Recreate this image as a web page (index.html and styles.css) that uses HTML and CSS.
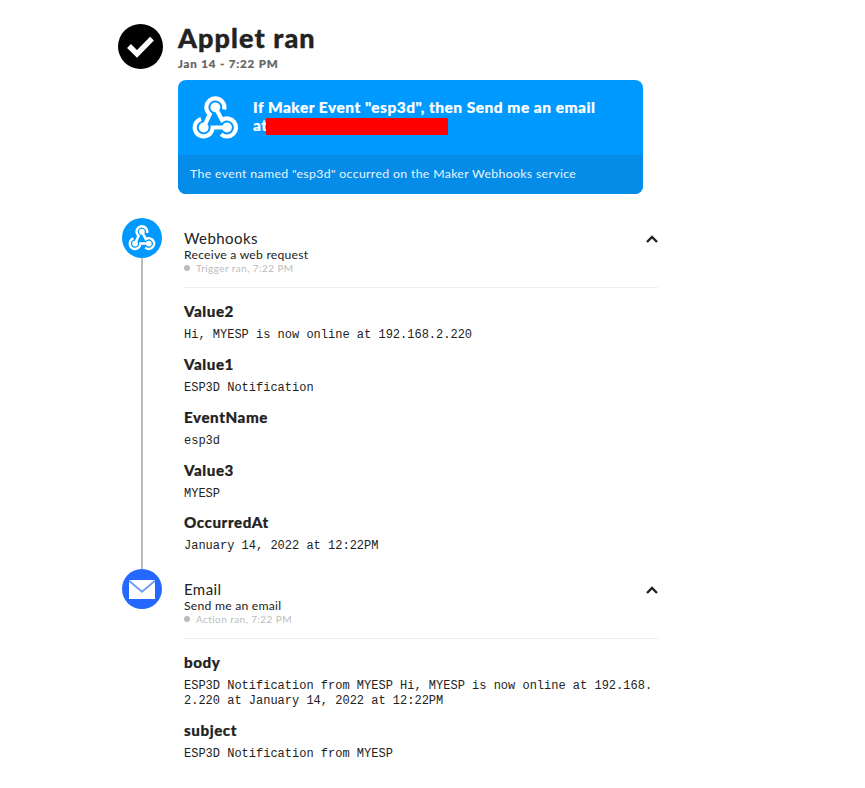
FILE: index.html
```html
<!DOCTYPE html>
<html lang="en">
<head>
<meta charset="utf-8">
<title>Applet ran</title>
<link rel="stylesheet" href="styles.css">
</head>
<body>
<svg class="defs" width="0" height="0" aria-hidden="true">
  <symbol id="webhook" viewBox="0 0 47 44">
    <g fill="none" stroke="currentColor" stroke-width="4.2">
      <path d="M32.1 13.4A9 9 0 1 0 17.7 18.3L11.7 31.5"/>
      <path d="M23.3 11.3L30 24A9 9 0 1 1 29 38.2"/>
      <path d="M35 31.5H20.7A9 9 0 1 1 9 22.9"/>
    </g>
    <g fill="currentColor"><circle cx="23.3" cy="11.3" r="4.9"/><circle cx="11.7" cy="31.5" r="4.9"/><circle cx="35" cy="31.5" r="4.9"/></g>
  </symbol>
</svg>
<main class="activity">
  <header class="summary">
    <svg class="status" viewBox="0 0 45 45"><circle cx="22.5" cy="22.5" r="22.5"/><path d="M11 22L19 30L34 14.7" fill="none" stroke="#fff" stroke-width="5.4"/></svg>
    <div class="summary-body">
      <h1>Applet ran</h1>
      <p class="date">Jan 14 - 7:22 PM</p>
      <section class="card">
        <div class="card-main">
          <svg class="card-icon"><use href="#webhook"/></svg>
          <p class="card-title">If Maker Event "esp3d", then Send me an email<br>at<span class="redacted"></span></p>
        </div>
        <p class="card-note">The event named "esp3d" occurred on the Maker Webhooks service</p>
      </section>
    </div>
  </header>

  <section class="step">
    <div class="rail">
      <div class="badge webhooks"><svg class="badge-hook"><use href="#webhook"/></svg></div>
      <div class="connector"></div>
    </div>
    <div class="content content-first">
      <div class="step-head">
        <div>
          <h2>Webhooks</h2>
          <p class="desc">Receive a web request</p>
          <p class="ran"><i class="dot"></i>Trigger ran, 7:22 PM</p>
        </div>
        <svg class="chevron" viewBox="0 0 12 8"><path d="M1 7L6 2L11 7"/></svg>
      </div>
      <dl>
        <dt>Value2</dt><dd>Hi, MYESP is now online at 192.168.2.220</dd>
        <dt>Value1</dt><dd>ESP3D Notification</dd>
        <dt>EventName</dt><dd>esp3d</dd>
        <dt>Value3</dt><dd>MYESP</dd>
        <dt>OccurredAt</dt><dd>January 14, 2022 at 12:22PM</dd>
      </dl>
    </div>
  </section>

  <section class="step">
    <div class="rail">
      <div class="badge email"><svg class="envelope" viewBox="0 0 26 19"><path d="M0 0H26V19H0Z" fill="#fff"/><path d="M0 .8L13 11.8L26 .8" fill="none" stroke="#6d9bff" stroke-width="1.8"/></svg></div>
    </div>
    <div class="content">
      <div class="step-head">
        <div>
          <h2>Email</h2>
          <p class="desc">Send me an email</p>
          <p class="ran"><i class="dot"></i>Action ran, 7:22 PM</p>
        </div>
        <svg class="chevron" viewBox="0 0 12 8"><path d="M1 7L6 2L11 7"/></svg>
      </div>
      <dl>
        <dt>body</dt><dd>ESP3D Notification from MYESP Hi, MYESP is now online at 192.168.<wbr>2.220 at January 14, 2022 at 12:22PM</dd>
        <dt>subject</dt><dd>ESP3D Notification from MYESP</dd>
      </dl>
    </div>
  </section>
</main>
</body>
</html>
```
FILE: styles.css
```css
* { box-sizing: border-box; }
body { margin: 0; background: #fff; color: #222; font-family: Lato, sans-serif; }
h1, h2, p, dl, dd { margin: 0; }
svg { display: block; flex: none; }
.defs { display: none; }
.activity { width: 541px; margin-left: 118px; padding-top: 24px; }
.summary { display: flex; gap: 15px; height: 194px; }
.status { width: 45px; height: 45px; }
.summary-body { width: 465px; }
h1 { font-size: 27px; line-height: 28px; font-weight: 900; letter-spacing: 1.1px; -webkit-text-stroke: .4px; }
.date { font-size: 11.5px; line-height: 14px; margin: 5px 0 9px; font-weight: 900; letter-spacing: .85px; color: #666; -webkit-text-stroke: .2px; }
.card { border-radius: 8px; overflow: hidden; background: #0099ff; color: #fff; }
.card-main { display: flex; height: 75px; padding: 16px 14px; gap: 14px; }
.card-icon { width: 47px; height: 44px; }
.card-title { font-size: 15.5px; line-height: 18px; padding-top: 2px; font-weight: 900; letter-spacing: .48px; white-space: nowrap; -webkit-text-stroke: .2px; }
.redacted { display: inline-block; width: 182px; height: 17px; margin-left: -1.5px; background: #f00; border-radius: 1px; vertical-align: -4px; }
.card-note { height: 39px; line-height: 38px; padding-left: 12px; background: #058ce8; font-size: 12.3px; letter-spacing: .33px; color: #e8f5ff; }
.step { display: flex; gap: 22px; margin-left: 4px; }
.rail { width: 40px; display: flex; flex-direction: column; align-items: center; }
.badge { width: 40px; height: 40px; border-radius: 50%; display: grid; place-items: center; color: #fff; flex: none; }
.webhooks { background: #0099ff; }
.email { background: #2468ff; }
.badge-hook { width: 28px; height: 26px; }
.envelope { width: 26px; height: 19px; }
.connector { width: 2px; flex: 1; background: #bcbcbc; }
.content { width: 474px; }
.content-first { height: 351px; }
.step-head { display: flex; justify-content: space-between; height: 70px; padding-top: 11px; border-bottom: 1px solid #eee; }
h2 { font-size: 15px; line-height: 18px; font-weight: 400; letter-spacing: .42px; }
.desc { font-size: 12.2px; line-height: 15px; letter-spacing: .23px; }
.ran { display: flex; align-items: center; font-size: 10px; line-height: 12px; color: #bcbcbc; letter-spacing: .42px; }
.dot { width: 6px; height: 6px; border-radius: 50%; background: #bcbcbc; margin-right: 6px; }
.chevron { width: 12px; height: 8px; margin-top: 6px; fill: none; stroke: #222; stroke-width: 2.4; }
dl { padding-top: 13.2px; }
dt { font-size: 15.2px; line-height: 20px; font-weight: 900; letter-spacing: .55px; -webkit-text-stroke: .2px; }
dd { font: 12px/15px "Liberation Mono", monospace; padding-top: 7px; margin-bottom: 10.8px; }
```
